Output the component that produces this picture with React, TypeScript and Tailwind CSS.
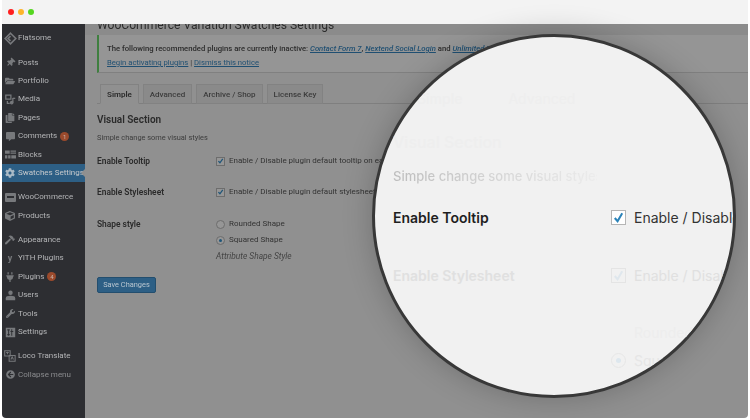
import type { ReactNode } from "react";
import {
  FaThumbtack,
  FaFolderOpen,
  FaCopy,
  FaCommentAlt,
  FaCog,
  FaCube,
  FaHammer,
  FaPlug,
  FaWrench,
  FaArrowCircleLeft,
} from "react-icons/fa";

type MenuItem = {
  label: string;
  icon: ReactNode;
  badge?: string;
  active?: boolean;
  dim?: boolean;
  gap?: boolean;
};

const Diamond = () => (
  <svg viewBox="0 0 16 16" className="w-[13px] h-[13px]" fill="none" stroke="currentColor" strokeWidth="2">
    <path d="M8 1.5 14.5 8 8 14.5 1.5 8Z" />
    <path d="M8 5 5 8l3 3" />
  </svg>
);

const MediaIcon = () => (
  <svg viewBox="0 0 14 14" className="w-[11px] h-[11px]" fill="none" stroke="currentColor" strokeWidth="1.6">
    <path d="M1 1.5h6.5v5H1Z" />
    <path d="M10 5v6" />
    <path d="M10 5.5h3" />
    <circle cx="8.5" cy="11" r="1.5" fill="currentColor" />
    <path d="M3 9v3h3" />
  </svg>
);

const BlocksIcon = () => (
  <svg viewBox="0 0 14 14" className="w-[11px] h-[11px]" fill="currentColor">
    <path d="M0 2h6v4H0ZM7 2h7v1.5H7ZM7 4.5h7V6H7ZM0 8h3v4H0ZM4 8h3v4H4ZM8 8h6v4H8Z" />
  </svg>
);

const UserIcon = () => (
  <svg viewBox="0 0 14 14" className="w-[11px] h-[11px]" fill="currentColor">
    <circle cx="7" cy="3.5" r="2.8" />
    <path d="M1 13v-2.5C1 8 3 7.2 7 7.2s6 .8 6 3.3V13Z" />
  </svg>
);

const SettingsIcon = () => (
  <svg viewBox="0 0 14 14" className="w-[11px] h-[11px]" fill="currentColor">
    <path fillRule="evenodd" d="M1 1h12v12H1ZM3 3v1.5h1V9H3v1.500h1V11h1.200v-.5H6V9h-.8V4.500H6V3ZM8 3v2H7v1.500h1V11h1.200V6.500H10.500V5H9.200V3Z" />
  </svg>
);

const LocoIcon = () => (
  <svg viewBox="0 0 14 14" className="w-[12px] h-[12px]" fill="none" stroke="currentColor" strokeWidth="1.2">
    <path d="M.8 1h6.400v6H.8Z" />
    <path d="M6 6.500h7v6.500H6Z" />
    <path d="M2.500 3h3M4 2v3" />
    <path d="M8 11l1.500-3 1.500 3" />
  </svg>
);

const menu: MenuItem[] = [
  { label: "Flatsome", icon: <Diamond /> },
  { label: "Posts", icon: <FaThumbtack size={9} className="rotate-45" />, gap: true },
  { label: "Portfolio", icon: <FaFolderOpen size={10} /> },
  { label: "Media", icon: <MediaIcon /> },
  { label: "Pages", icon: <FaCopy size={10} /> },
  { label: "Comments", icon: <FaCommentAlt size={9} />, badge: "1" },
  { label: "Blocks", icon: <BlocksIcon /> },
  { label: "Swatches Settings", icon: <FaCog size={10} />, active: true },
  {
    label: "WooCommerce",
    icon: (
      <span className="w-[11px] h-[9px] rounded-[1px] bg-current flex items-center justify-center">
        <span className="w-[7px] h-[2px] bg-[#2d2e32]" />
      </span>
    ),
    gap: true,
  },
  { label: "Products", icon: <FaCube size={10} /> },
  { label: "Appearance", icon: <FaHammer size={10} />, gap: true },
  { label: "YITH Plugins", icon: <span className="text-[9px] font-bold leading-none">y</span> },
  { label: "Plugins", icon: <FaPlug size={10} />, badge: "4" },
  { label: "Users", icon: <UserIcon /> },
  { label: "Tools", icon: <FaWrench size={9} /> },
  { label: "Settings", icon: <SettingsIcon /> },
  { label: "Loco Translate", icon: <LocoIcon />, gap: true },
  { label: "Collapse menu", icon: <FaArrowCircleLeft size={9} />, dim: true },
];

function Sidebar() {
  return (
    <aside className="w-[83px] shrink-0 bg-[#2d2e32] pt-[5px] text-[8px] text-[#b4b5b7]">
      {menu.map((item) => (
        <div
          key={item.label}
          className={`relative h-[18.4px] flex items-center whitespace-nowrap blur-[0.3px] ${item.gap ? "mt-[6px]" : ""} ${
            item.active ? "bg-[#2d5f85] text-[#c6c9cc]" : ""
          } ${item.dim ? "text-[#8a8b8e]" : ""}`}
        >
          <span className={`w-[16px] flex justify-center ${item.active ? "text-[#a9bac6]" : "text-[#77797c]"}`}>
            {item.icon}
          </span>
          <span>{item.label}</span>
          {item.badge && (
            <span className="ml-[3px] w-[9px] h-[9px] rounded-full bg-[#9b4a2c] text-[6px] leading-[9px] text-center text-[#c9b5ab]">
              {item.badge}
            </span>
          )}
          {item.active && (
            <span className="absolute right-0 top-[5px] border-y-[4px] border-r-[4px] border-y-transparent border-r-[#8f8f8f]" />
          )}
        </div>
      ))}
    </aside>
  );
}

function Checkbox() {
  return (
    <span className="w-[9px] h-[9px] border border-[#6d6d6d] bg-[#969696] shrink-0 flex items-center justify-center">
      <svg viewBox="0 0 10 10" className="w-[8px] h-[8px]" fill="none" stroke="#1f5578" strokeWidth="1.8">
        <path d="M2 5.200 4.200 7.500 8.200 2" />
      </svg>
    </span>
  );
}

function Radio({ on }: { on?: boolean }) {
  return (
    <span className="w-[9px] h-[9px] rounded-full border border-[#6d6d6d] bg-[#969696] shrink-0 flex items-center justify-center">
      {on && <span className="w-[3px] h-[3px] rounded-full bg-[#1f5578]" />}
    </span>
  );
}

function Row({ label, children, h }: { label: string; children: ReactNode; h: string }) {
  return (
    <div className={`flex ${h}`}>
      <div className="w-[119px] font-semibold text-[#2a2a2a] text-[8.4px] leading-[12px]">{label}</div>
      <div className="flex-1 leading-[12px]">{children}</div>
    </div>
  );
}

function Main() {
  const tabs = ["Simple", "Advanced", "Archive / Shop", "License Key"];
  return (
    <main className="flex-1 min-w-0 overflow-hidden bg-[#909090] text-[#333] text-[8px] blur-[0.4px]">
      <div className="h-[11px] bg-[#8b8b8b] pl-[12px] overflow-hidden">
        <h1 className="-mt-[8px] text-[12.1px] leading-[18px] text-[#2c2c2c] whitespace-nowrap">
          WooCommerce Variation Swatches Settings
        </h1>
      </div>
      <div className="ml-[12px] h-[38px] bg-[#959595] border-l-2 border-[#3f7f3f] border-b border-b-[#808080] pl-[8px] pt-[7px] leading-[14px] text-[7.7px]">
        <p className="whitespace-nowrap font-medium text-[#2c2c2c]">
          The following recommended plugins are currently inactive:{" "}
          <a className="italic underline text-[#1f4f72]">Contact Form 7</a>,{" "}
          <a className="italic underline text-[#1f4f72]">Nextend Social Login</a> and{" "}
          <a className="italic underline text-[#1f4f72]">Unlimited Elements</a>
        </p>
        <p className="whitespace-nowrap">
          <a className="underline text-[#1f4f72]">Begin activating plugins</a> |{" "}
          <a className="underline text-[#1f4f72]">Dismiss this notice</a>
        </p>
      </div>

      <div className="mt-[11px] ml-[12px] pl-[3px] flex gap-[4px] h-[20px] border-b border-[#7f7f7f] font-medium">
        {tabs.map((tab, i) => (
          <div
            key={tab}
            className={`h-[20px] px-[6px] leading-[19px] border border-[#828282] whitespace-nowrap ${
              i === 0 ? "bg-[#909090] border-b-[#909090] font-semibold text-[#2a2a2a]" : "bg-[#8a8a8a] text-[#3c3c3c]"
            }`}
          >
            {tab}
          </div>
        ))}
      </div>

      <div className="pl-[12px] pt-[9px]">
        <h2 className="text-[10px] leading-[14px] font-semibold text-[#2a2a2a]">Visual Section</h2>
        <p className="mt-[5px] leading-[12px] text-[7.4px] text-[#3c3c3c]">Simple change some visual styles</p>

        <div className="mt-[11px]">
          <Row label="Enable Tooltip" h="h-[31px]">
            <div className="flex items-center gap-[4px] whitespace-nowrap">
              <Checkbox />
              Enable / Disable plugin default tooltip on each product
            </div>
          </Row>
          <Row label="Enable Stylesheet" h="h-[32px]">
            <div className="flex items-center gap-[4px] whitespace-nowrap">
              <Checkbox />
              Enable / Disable plugin default stylesheet
            </div>
          </Row>
          <Row label="Shape style" h="h-[60px]">
            <div className="flex items-center gap-[4px]">
              <Radio />
              Rounded Shape
            </div>
            <div className="mt-[4px] flex items-center gap-[4px]">
              <Radio on />
              Squared Shape
            </div>
            <div className="mt-[4px] italic text-[8.4px] text-[#444]">Attribute Shape Style</div>
          </Row>
        </div>

        <button className="block mt-[-1px] h-[16px] w-[59px] p-0 whitespace-nowrap rounded-[2px] bg-[#2d5f85] border border-[#234e6e] text-[7.4px] text-[#b9c6d0]">
          Save Changes
        </button>
      </div>
    </main>
  );
}

function Lens() {
  return (
    <div className="absolute left-[370px] top-[10px] w-[364px] h-[364px] rounded-full bg-[#f1f1f1] border-[3px] border-[#383838] shadow-[0_0_30px_rgba(0,0,0,0.22)] overflow-hidden font-['Inter',sans-serif]">
      <div className="pl-[18px] pt-[52px] whitespace-nowrap">
        <div className="flex h-[18px] items-center pl-[24px] gap-[46px] text-[14px] text-[#eeeeee]">
          <span className="font-medium">Simple</span>
          <span>Advanced</span>
        </div>
        <p className="mt-[24px] h-[22px] text-[16px] leading-[22px] font-medium text-[#eeeeee]">Visual Section</p>
        <p className="mt-[14px] text-[13px] leading-[18px] font-medium w-[204px] bg-gradient-to-r from-[#bdbdbd] to-[#ececec] bg-clip-text text-transparent">
          Simple change some visual styles
        </p>
        <div className="mt-[23px] flex h-[18px] items-center">
          <span className="w-[218px] shrink-0 text-[14px] font-semibold text-[#1f1f1f]">Enable Tooltip</span>
          <span className="w-[15px] h-[15px] shrink-0 border border-[#b5b5b5] bg-white flex items-center justify-center">
            <svg viewBox="0 0 14 14" className="w-[13px] h-[13px]" fill="none" stroke="#2b83b9" strokeWidth="2.200">
              <path d="M3 7.500 6 11 11 2.500" />
            </svg>
          </span>
          <span className="ml-[8px] text-[14px] text-[#333]">Enable / Disable</span>
        </div>
        <div className="mt-[40px] flex h-[18px] items-center text-[#e0e0e0]">
          <span className="w-[218px] shrink-0 text-[14px] font-semibold">Enable Stylesheet</span>
          <span className="w-[15px] h-[15px] shrink-0 border border-[#e4e4e4] flex items-center justify-center">
            <svg viewBox="0 0 14 14" className="w-[13px] h-[13px]" fill="none" stroke="#dfe7ed" strokeWidth="2.200">
              <path d="M3 7.500 6 11 11 2.500" />
            </svg>
          </span>
          <span className="ml-[8px] text-[14px]">Enable / Disable</span>
        </div>
        <div className="mt-[39px] flex h-[18px] items-center pl-[218px] text-[#ededed]">
          <span className="w-[15px] shrink-0" />
          <span className="ml-[8px] text-[14px]">Rounded</span>
        </div>
        <div className="mt-[10px] flex h-[18px] items-center pl-[218px] text-[#e6e6e6]">
          <span className="w-[15px] h-[15px] shrink-0 rounded-full border border-[#e6e6e6] flex items-center justify-center">
            <span className="w-[5px] h-[5px] rounded-full bg-[#dde7ee]" />
          </span>
          <span className="ml-[8px] text-[14px]">Squared</span>
        </div>
      </div>
    </div>
  );
}

export default function App() {
  return (
    <div className="w-[750px] h-[420px] bg-white overflow-hidden pl-[2px] pr-[2px] pb-[2px] font-['Roboto','Liberation_Sans',sans-serif]">
      <div className="h-full rounded-b-[4px] overflow-hidden flex flex-col">
        <div className="h-[24px] shrink-0 bg-[#f3f3f3] flex items-center gap-[4px] pl-[8px] -ml-[2px] -mr-[2px]">
          <span className="w-[6px] h-[6px] rounded-full bg-[#ff1f1f]" />
          <span className="w-[6px] h-[6px] rounded-full bg-[#fdb52b]" />
          <span className="w-[6px] h-[6px] rounded-full bg-[#55d620]" />
        </div>
        <div className="relative flex-1 flex min-h-0">
          <Sidebar />
          <Main />
          <Lens />
        </div>
      </div>
    </div>
  );
}
